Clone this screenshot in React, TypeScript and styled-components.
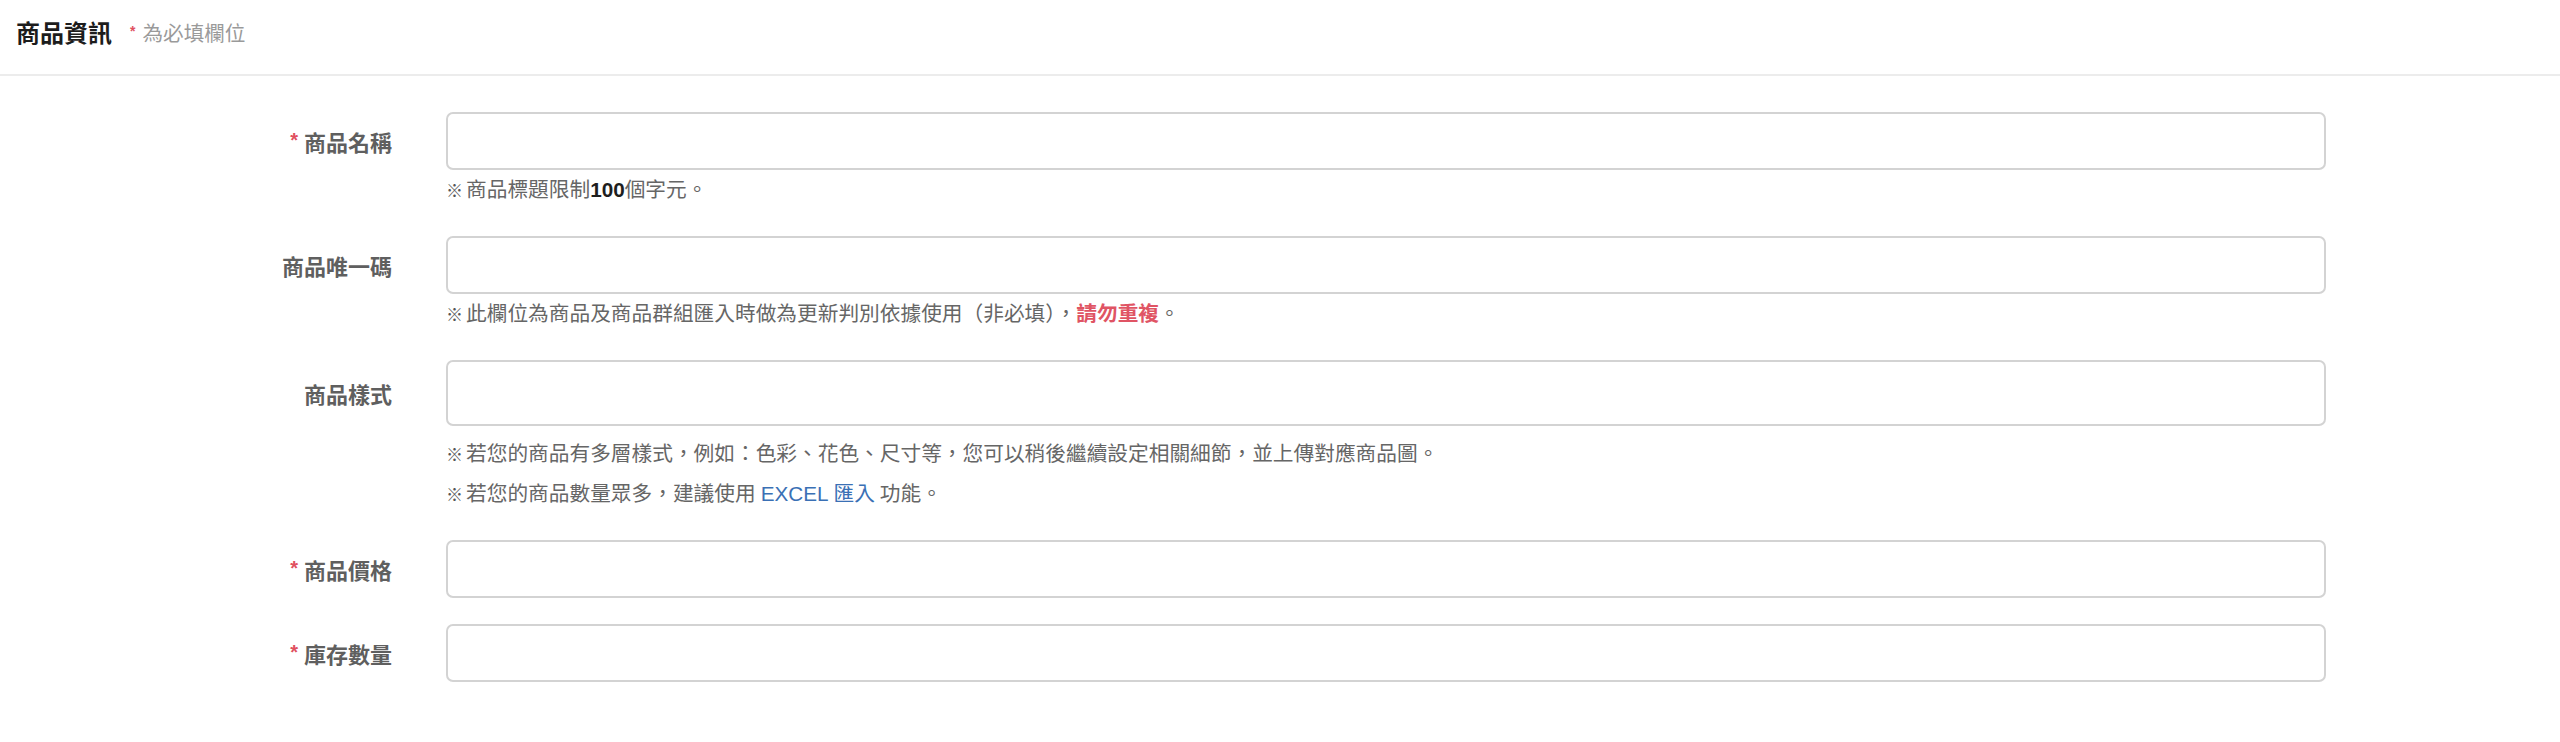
import React from "react";
import styled, { createGlobalStyle } from "styled-components";

const Global = createGlobalStyle`
  html, body { margin: 0; padding: 0; background: #fff; }
  body { font-family: "Liberation Sans", "Noto Sans CJK TC", sans-serif; }
  * { box-sizing: border-box; }
`;

const Header = styled.div`
  height: 76px;
  border-bottom: 2px solid #ececec;
  display: flex;
  align-items: center;
  padding-left: 16px;
  padding-bottom: 6px;
`;

const Title = styled.h2`
  margin: 0;
  font-size: 24px;
  font-weight: 700;
  color: #1c1c1c;
  line-height: 1;
`;

const Sub = styled.span`
  margin-left: 18px;
  font-size: 20.6px;
  color: #9a9a9a;
  line-height: 1;
  display: flex;
  align-items: center;
`;

const Star = styled.span<{ $small?: boolean }>`
  color: #e0505f;
  font-size: ${(p) => (p.$small ? "14px" : "20px")};
  margin-right: ${(p) => (p.$small ? "7px" : "6px")};
  font-weight: 700;
  position: relative;
  top: ${(p) => (p.$small ? "-3px" : "-1px")};
`;

const Form = styled.div`
  padding: 36px 234px 0 234px;
`;

const Row = styled.div`
  display: flex;
  column-gap: 54px;
  margin-bottom: 26px;
`;

const LabelCell = styled.div<{ $h: number }>`
  width: 158px;
  flex: none;
  height: ${(p) => p.$h}px;
  display: flex;
  align-items: center;
  justify-content: flex-end;
  font-size: 22px;
  font-weight: 700;
  color: #5f5f5f;
  white-space: nowrap;
`;

const Field = styled.div`
  flex: 1;
  min-width: 0;
`;

const Input = styled.input<{ $h: number }>`
  display: block;
  width: 100%;
  height: ${(p) => p.$h}px;
  border: 2px solid #d3d3d3;
  border-radius: 7px;
  background: #fff;
  font-size: 20px;
  padding: 0 14px;
  outline: none;
`;

const Hints = styled.div<{ $gap?: number }>`
  margin-top: ${(p) => p.$gap ?? 0}px;
`;

const Hint = styled.div`
  font-size: 20.7px;
  line-height: 40px;
  height: 40px;
  color: #666;
  white-space: nowrap;
`;

const Mark = styled.span`
  font-size: 17px;
  margin-right: 3px;
  color: #555;
`;

const Strong = styled.b`
  color: #1e1e1e;
  font-weight: 700;
`;

const Warn = styled.b`
  color: #e05464;
  font-weight: 700;
`;

const Link = styled.a`
  color: #3a70b5;
  text-decoration: none;
  margin: 0 5px;
`;

type RowDef = {
  label: string;
  required?: boolean;
  h?: number;
  hintGap?: number;
  hints?: React.ReactNode[];
};

const rows: RowDef[] = [
  {
    label: "商品名稱",
    required: true,
    hints: [
      <>
        商品標題限制<Strong>100</Strong>個字元。
      </>,
    ],
  },
  {
    label: "商品唯一碼",
    hints: [
      <>
        此欄位為商品及商品群組匯入時做為更新判別依據使用（非必填），<Warn>請勿重複</Warn>。
      </>,
    ],
  },
  {
    label: "商品樣式",
    h: 66,
    hintGap: 8,
    hints: [
      <>若您的商品有多層樣式，例如：色彩、花色、尺寸等，您可以稍後繼續設定相關細節，並上傳對應商品圖。</>,
      <>
        若您的商品數量眾多，建議使用<Link href="#">EXCEL 匯入</Link>功能。
      </>,
    ],
  },
  { label: "商品價格", required: true },
  { label: "庫存數量", required: true },
];

export default function App() {
  return (
    <>
      <Global />
      <Header>
        <Title>商品資訊</Title>
        <Sub>
          <Star $small>*</Star>為必填欄位
        </Sub>
      </Header>
      <Form>
        {rows.map((r) => {
          const h = r.h ?? 58;
          return (
            <Row key={r.label}>
              <LabelCell $h={h}>
                {r.required && <Star>*</Star>}
                {r.label}
              </LabelCell>
              <Field>
                <Input $h={h} type="text" />
                {r.hints && (
                  <Hints $gap={r.hintGap}>
                    {r.hints.map((hn, i) => (
                      <Hint key={i}>
                        <Mark>※</Mark>
                        {hn}
                      </Hint>
                    ))}
                  </Hints>
                )}
              </Field>
            </Row>
          );
        })}
      </Form>
    </>
  );
}
